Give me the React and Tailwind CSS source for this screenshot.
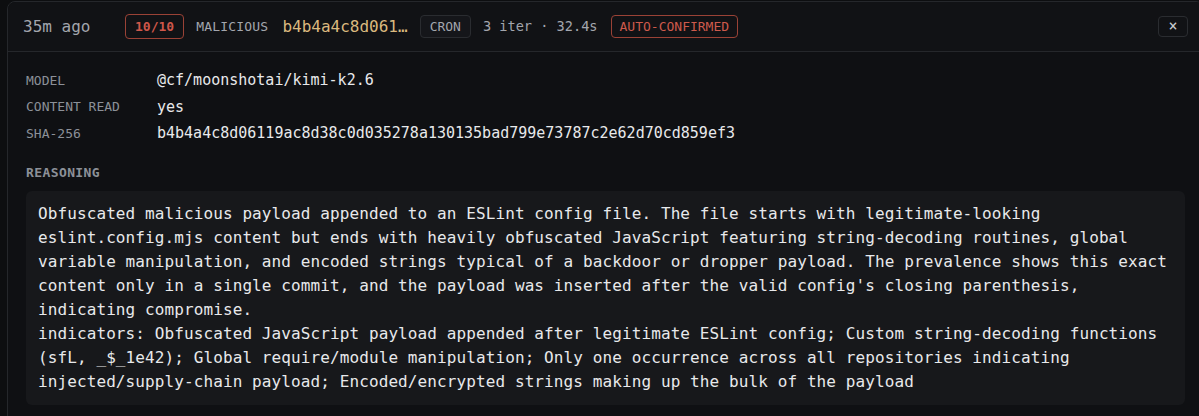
const mono = { fontFamily: '"DejaVu Sans Mono", "Liberation Mono", monospace' };

const reasoning = `Obfuscated malicious payload appended to an ESLint config file. The file starts with legitimate-looking eslint.config.mjs content but ends with heavily obfuscated JavaScript featuring string-decoding routines, global variable manipulation, and encoded strings typical of a backdoor or dropper payload. The prevalence shows this exact content only in a single commit, and the payload was inserted after the valid config's closing parenthesis, indicating compromise.
indicators: Obfuscated JavaScript payload appended after legitimate ESLint config; Custom string-decoding functions (sfL, _$_1e42); Global require/module manipulation; Only one occurrence across all repositories indicating injected/supply-chain payload; Encoded/encrypted strings making up the bulk of the payload`;

function MetaRow({ label, value }) {
  return (
    <div className="flex items-center h-[26.5px]">
      <span className="w-[131px] text-[13px] text-[#8c9098]">{label}</span>
      <span className="text-[15px] text-[#e8e9eb]">{value}</span>
    </div>
  );
}

export default function App() {
  return (
    <div className="w-[1199px] h-[416px] overflow-hidden bg-[#0d0e10] pt-px pl-[7px]" style={mono}>
      <div className="w-[1197px] h-[440px] rounded-lg border border-[#25272b] bg-[#0f1013]">
        {/* header */}
        <div className="h-[50px] flex items-center px-[15px] border-b border-[#25272b] bg-[#111215] rounded-t-lg">
          <span className="w-[102px] text-[16px] text-[#a3a6ad]">35m ago</span>
          <span className="h-[25px] px-[9px] flex items-center rounded border border-[#9a4236] text-[13px] font-bold text-[#cf574a]">10/10</span>
          <span className="ml-3 text-[13px] tracking-[0.2px] text-[#a3a6ad]">MALICIOUS</span>
          <span className="ml-[14px] text-[16px] text-[#dbb97f]">b4b4a4c8d061…</span>
          <span className="ml-3 h-[23px] px-[9px] flex items-center rounded border border-[#2a2c30] bg-[#15161a] text-[13px] text-[#a3a6ad]">CRON</span>
          <span className="ml-3 text-[13.6px] text-[#a3a6ad]">3 iter · 32.4s</span>
          <span className="ml-[13px] h-[23px] px-[8px] flex items-center rounded border border-[#9a4236] text-[13px] text-[#cd5a4c]">AUTO-CONFIRMED</span>
          <button className="ml-auto w-[30px] h-[21px] flex items-center justify-center rounded border border-[#2a2c30] text-[#c8cace] text-[15px] leading-none">×</button>
        </div>

        {/* body */}
        <div className="px-[18px] pt-[15px]">
          <MetaRow label="MODEL" value="@cf/moonshotai/kimi-k2.6" />
          <MetaRow label="CONTENT READ" value="yes" />
          <MetaRow label="SHA-256" value="b4b4a4c8d06119ac8d38c0d035278a130135bad799e73787c2e62d70cd859ef3" />

          <div className="mt-[16px] text-[13px] leading-[20px] font-bold tracking-[0.4px] text-[#8c9098]">REASONING</div>

          <div className="mt-2 rounded-md bg-[#17181b] px-[12px] py-[11px] text-[16px] leading-[24px] tracking-[0.1px] text-[#e8e9eb] whitespace-pre-wrap">
            {reasoning}
          </div>
        </div>
      </div>
    </div>
  );
}
